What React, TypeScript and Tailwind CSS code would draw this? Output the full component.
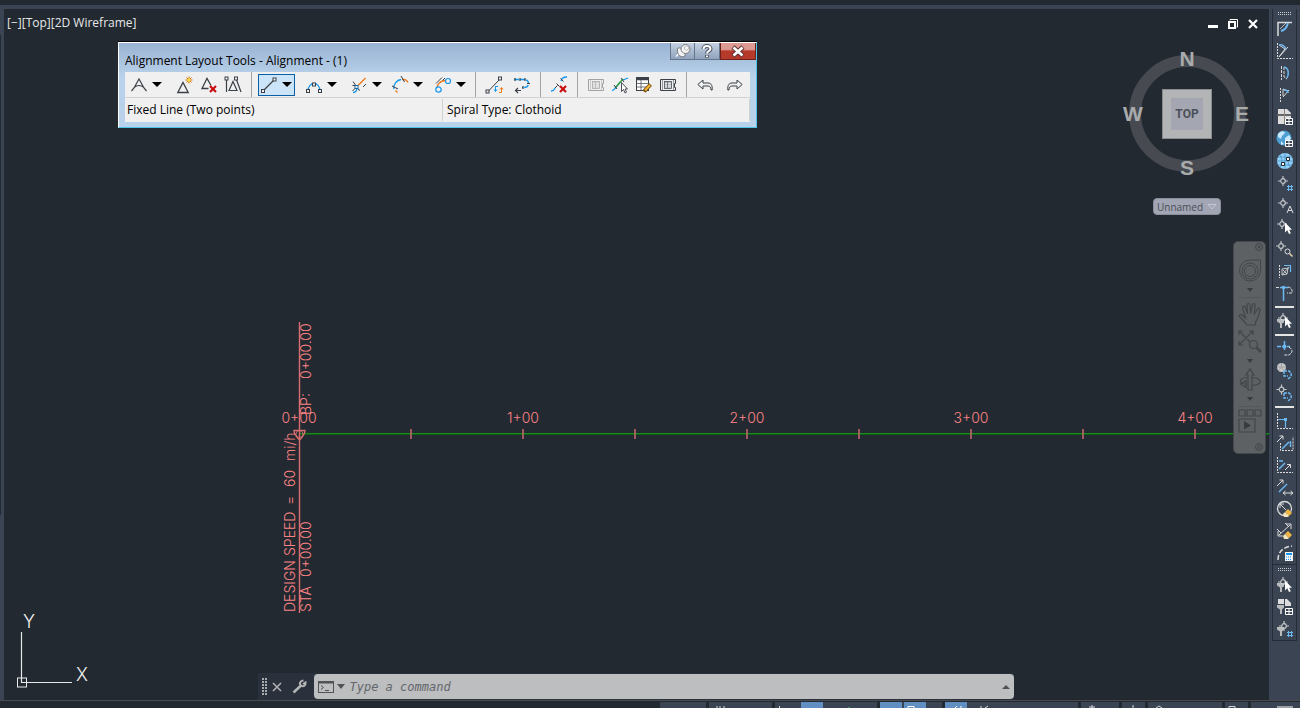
import { ReactNode } from 'react';
import clsx from 'clsx';

const DARK = '#3b4048';
const BLUE = '#1296f0';
const ORANGE = '#f07818';
const RED = '#c80f0f';
const SKY = '#6cb8f0';
const LIGHT = '#dcdcdc';

/* ---------- layout tools window ---------- */

function Glyph({ children }: { children: ReactNode }) {
  return (
    <svg width="16" height="18" viewBox="0 0 16 18" fill="none" stroke={DARK} className="shrink-0 overflow-visible">
      {children}
    </svg>
  );
}

const Node = ({ x, y, color = DARK }: { x: number; y: number; color?: string }) => (
  <rect x={x - 1.5} y={y - 1.5} width="3" height="3" fill="#f0f0f0" stroke={color} />
);

const RedCross = ({ x, y }: { x: number; y: number }) => (
  <path
    d={`M${x} ${y}l6 6M${x + 6} ${y}l-6 6`}
    stroke={RED}
    strokeWidth="2.2"
  />
);

const Sheet = ({ muted }: { muted?: boolean }) => (
  <g stroke={muted ? '#a2a2a2' : DARK}>
    <path d="M.5 3.500h15v4h-1v4h1v3H.5z" />
    <path d="M2.500 4v10" strokeWidth=".5" />
    <path d="M13.500 4v10" strokeWidth=".5" />
    <rect x="4.500" y="5.500" width="7" height="7" fill={muted ? '#d4d4d4' : '#b4bac2'} strokeWidth=".7" />
    <path d="M5 7.500h6M5 9.500h6M5 11h6" stroke="#f0f0f0" strokeWidth=".8" />
    <path d="M7.500 6v6" strokeWidth=".6" />
  </g>
);

const glyphs: Record<string, ReactNode> = {
  tangent: (
    <path d="M.5 15 3 12 8 3l5 9 2.500 3M3 11.500q5-4 10 0" strokeWidth="1.200" />
  ),
  insertPi: (
    <>
      <path d="M.8 16.500 6 6.500l5.200 10z" strokeWidth="1.300" />
      <path d="M12 .5v7M8.500 4h7M9.500 1.500l5 5M14.500 1.500l-5 5" stroke="#d86c00" />
      <circle cx="12" cy="4" r="1.500" fill="#ffe838" stroke="none" />
    </>
  ),
  deletePi: (
    <>
      <path d="M7.500 12.500H1L6 2.500l4 7" strokeWidth="1.300" />
      <RedCross x={9} y={10} />
    </>
  ),
  breakPi: (
    <>
      <path d="M1.500 3v13M11 2.500 16 16M4 14.500 8 5.500l4 9z" strokeWidth="1.200" />
      <Node x={1.5} y={2.5} />
      <Node x={11} y={2.5} />
    </>
  ),
  line: (
    <>
      <path d="M2 15 14 3" strokeWidth="1.200" />
      <Node x={2} y={15} />
      <Node x={13.5} y={3.5} />
    </>
  ),
  curve: (
    <>
      <path d="M2 15C2.500 5 13.500 5 14 15" stroke={BLUE} strokeWidth="1.300" />
      <Node x={2} y={15} />
      <Node x={8} y={8.5} />
      <Node x={14} y={15} />
    </>
  ),
  spiral: (
    <>
      <path d="M2 5.500 5.500 10.500M1.500 15l3-3M15 8l-3 3M1.500 9.500h3M7 13l2 1.500" />
      <path d="M7 9.500 14.500 2" stroke={ORANGE} strokeWidth="1.300" />
      <path d="M2 16.500c3 0 4-2 4-5" stroke={BLUE} strokeWidth="1.300" />
      <Node x={5.5} y={11} color="#1c6aa8" />
    </>
  ),
  floatCurve: (
    <>
      <path d="M2 13C1 8 5 4 9 3.500" stroke={BLUE} strokeWidth="1.300" />
      <path d="M10 3.500c3-.5 5 .5 6 3M3.500 14.500l2 2" stroke={ORANGE} strokeWidth="1.300" />
      <path d="M0 10 6 13M9 0l3.500 6" />
    </>
  ),
  reverse: (
    <>
      <path d="M1 7.500 7 1.500M5 7l5-5" />
      <path d="M2 11C4 6 6 5 11 4.500" stroke={ORANGE} strokeWidth="1.300" />
      <circle cx="3.500" cy="13.500" r="2.700" stroke={BLUE} strokeWidth="1.200" />
      <circle cx="13" cy="5" r="2.500" stroke={BLUE} strokeWidth="1.200" />
    </>
  ),
  convert: (
    <>
      <path d="M2 15.500 14 3" />
      <Node x={1.5} y={15.5} />
      <Node x={14} y={2.5} />
      <path d="M12 10.500h-2.500V15M8 13.500l1.500 2 1.500-2" stroke={BLUE} />
      <path d="M13 16.500h2.500V12M14 13.500l1.500-2 1.500 2" stroke={ORANGE} />
    </>
  ),
  direction: (
    <>
      <path d="M0 3.500h10c6 0 6 8 0 8H8" stroke={BLUE} strokeWidth="1.300" strokeDasharray="5 1" />
      <path d="M1 2v3M6 2v3M11 2v3M13 7.500h3M9 10v3M7 14.500H1M4 12l-2.500 2.500L4 17" strokeWidth="1.200" />
    </>
  ),
  deleteEntity: (
    <>
      <path d="M0 15c3 0 3-1 4-3M10 5c1-3 2-4 6-4" stroke={BLUE} strokeWidth="1.300" />
      <path d="m4 12 2.500-2.500M5.500 7.500l3 3M9.500 2.500l3 3" />
      <RedCross x={9} y={10} />
    </>
  ),
  sheetMuted: <Sheet muted />,
  pick: (
    <>
      <path d="M0 14.500C3 14 6 9 8 6M11 4l5-2" stroke={BLUE} strokeWidth="1.200" />
      <path d="M3 12 11 3" stroke="#2f9a35" strokeWidth="1.300" />
      <path d="m2 9 3 4M9 2l3 4" />
      <path d="M9.500 6.500v9l2-2 1.500 3.500 1.500-.8-1.500-3.200h2.500z" fill="#fff" strokeWidth=".9" />
    </>
  ),
  table: (
    <>
      <rect x=".5" y="1.500" width="12" height="13" fill="#fff" />
      <path d="M1 3h11" strokeWidth="2.500" />
      <path d="M1 7.500h11M1 11h11M5 4v10" strokeWidth=".7" />
      <path d="m8 15.500 6.500-7" stroke="#6a4a10" strokeWidth="4" />
      <path d="m9 14.500 5-5.500" stroke="#f2b430" strokeWidth="2.300" />
    </>
  ),
  sheet: <Sheet />,
  undo: <path d="M6 4 .8 8.500 6 13v-3h5c2 0 3 1.500 3 4h1.200C15.500 9 14 7 11 7H6z" />,
  redo: <path d="m10 4 5.200 4.500L10 13v-3H5c-2 0-3 1.500-3 4H.8C.5 9 2 7 5 7h5z" />,
};

function ToolButton({ icon, label, className }: { icon: string; label: string; className?: string }) {
  return (
    <button aria-label={label} className={clsx('flex h-6 w-6 items-center justify-center', className)}>
      <Glyph>{glyphs[icon]}</Glyph>
    </button>
  );
}

function SplitButton({ icon, label, active, className }: { icon: string; label: string; active?: boolean; className?: string }) {
  return (
    <button
      aria-label={label}
      className={clsx(
        'flex h-[22px] w-[37px] items-center justify-between border px-[2px]',
        active ? 'border-[#0a5ea8] bg-[#cce4f7]' : 'border-transparent',
        className
      )}
    >
      <Glyph>{glyphs[icon]}</Glyph>
      <svg width="10" height="5" viewBox="0 0 10 5">
        <path d="M0 0h10L5 5z" fill="#000" />
      </svg>
    </button>
  );
}

const Divider = () => <span className="mx-1.5 h-[25px] w-px bg-[#a5a5a5]" />;

function LayoutTools() {
  return (
    <section className="absolute top-[33px] left-[114px] w-[639px] border border-t-white border-l-white border-r-[#4cc5e6] border-b-[#4cc5e6] bg-linear-to-b from-[#98b3d2] to-[#b9d1ea] to-40% px-1.5 pb-[5px] font-['Open_Sans',sans-serif] text-[12px] leading-4 text-black shadow-[0_-1px_0_#000]">
      <header className="flex h-[29px] items-end justify-between">
        <h1 className="pb-[3px]">Alignment Layout Tools - Alignment - (1)</h1>
        <div className="-mr-1.5 flex self-start">
          <button aria-label="Pin" className="flex h-[17px] w-[25px] items-center justify-center border border-t-0 border-[#65758a] bg-linear-to-b from-[#c5d2e2] to-[#8fa3bd]">
            <svg width="18" height="16" viewBox="0 0 18 16" fill="#f4f4f4" stroke="#65676b">
              <path d="M6 9.500 2 13.500" stroke="#fff" strokeWidth="1.500" />
              <path d="M4 5c3-1 8 4 7 8-2 1-3 1-5 0S2.500 7 4 5z" stroke="#77797c" />
              <circle cx="11.500" cy="6" r="4.500" stroke="#77797c" />
              <circle cx="12.500" cy="5" r="2.200" stroke="#bbb" />
            </svg>
          </button>
          <button aria-label="Help" className="flex h-[17px] w-[25px] items-center justify-center border border-t-0 border-l-0 border-[#65758a] bg-linear-to-b from-[#c5d2e2] to-[#8fa3bd]">
            <svg width="12" height="15" viewBox="0 0 12 15" fill="none">
              <path d="M2.500 5C2.500 1 9.500 1 9.500 5c0 2-3.500 2-3.500 4.500M6 11v2.500" stroke="#4c525c" strokeWidth="4" />
              <path d="M2.500 5C2.500 1 9.500 1 9.500 5c0 2-3.500 2-3.500 4.500M6 11.500V13" stroke="#fff" strokeWidth="2" />
            </svg>
          </button>
          <button aria-label="Close" className="flex h-[17px] w-9 items-center justify-center border border-t-0 border-[#6e2019] bg-linear-to-b from-[#dc9a92] from-40% to-[#b63a2a] to-50%">
            <svg width="14" height="13" viewBox="0 0 14 13">
              <path d="m2 2 10 9M12 2 2 11" stroke="#5a3030" strokeWidth="4.500" />
              <path d="m2.500 2.500 9 8M11.500 2.500l-9 8" stroke="#fff" strokeWidth="2.700" />
            </svg>
          </button>
        </div>
      </header>
      <div className="bg-[#f0f0f0]">
        <div className="flex h-[26px] items-center border-b border-[#d2d2d2] pl-[3px]">
          <SplitButton icon="tangent" label="Tangent-Tangent" />
          <ToolButton icon="insertPi" label="Insert PI" className="ml-2" />
          <ToolButton icon="deletePi" label="Delete PI" />
          <ToolButton icon="breakPi" label="Break-apart PI" />
          <Divider />
          <SplitButton icon="line" label="Fixed Line" active />
          <SplitButton icon="curve" label="Fixed Curve" className="ml-2" />
          <SplitButton icon="spiral" label="Line with Spiral" className="ml-2" />
          <SplitButton icon="floatCurve" label="Spiral-Curve-Spiral" className="ml-1" />
          <SplitButton icon="reverse" label="Fixed Spiral" className="ml-1.5" />
          <Divider />
          <ToolButton icon="convert" label="Convert line and arc" />
          <ToolButton icon="direction" label="Reverse direction" className="ml-1" />
          <Divider />
          <ToolButton icon="deleteEntity" label="Delete sub-entity" />
          <Divider />
          <ToolButton icon="sheetMuted" label="Edit best fit data" />
          <ToolButton icon="pick" label="Pick sub-entity" />
          <ToolButton icon="table" label="Alignment grid view" />
          <ToolButton icon="sheet" label="Sub-entity editor" />
          <Divider />
          <ToolButton icon="undo" label="Undo" />
          <ToolButton icon="redo" label="Redo" className="ml-1.5" />
        </div>
        <div className="grid grid-cols-[318px_1fr] py-px">
          <p className="border-r border-[#d2d2d2] py-[3px] pl-0.5">Fixed Line (Two points)</p>
          <p className="border-r border-[#d2d2d2] py-[3px] pl-1">Spiral Type: Clothoid</p>
        </div>
      </div>
    </section>
  );
}

/* ---------- drawing ---------- */

const stations = ['1+00', '2+00', '3+00', '4+00'];

function Drawing() {
  return (
    <svg className="absolute inset-0 h-full w-full" fill="none">
      <g transform="translate(295 424)">
        <path d="M0 1H975" stroke="#0c5c12" strokeWidth="2" />
        <path d="M0 .5H975" stroke="#178a1e" strokeWidth="1" />
        <g stroke="#d86e70" strokeWidth="1.400">
          <path d="M.5-111v291" />
          {stations.map((s, i) => (
            <path key={s} d={`M${i * 224 + 112}-4v10M${i * 224 + 224}-4v10`} />
          ))}
          <path d="M-5-2.500h11q0 4-5.500 9.500Q-5 1.500-5-2.500z" />
          <circle cx=".5" cy="1" r="3.500" strokeWidth=".8" />
        </g>
        <g className="font-['Inter',sans-serif] text-[14px] font-light" fill="#ff8486">
          <text x="0" y="-10" textAnchor="middle">0+00</text>
          {stations.map((s, i) => (
            <text key={s} x={(i + 1) * 224} y="-10" textAnchor="middle">{s}</text>
          ))}
          <g transform="rotate(-90)">
            <text x="-179" y="-4">DESIGN</text>
            <text x="-123" y="-4">SPEED</text>
            <text x="-72" y="-4">=</text>
            <text x="-54" y="-4">60</text>
            <text x="-28" y="-4">mi/h</text>
            <text x="-179" y="12">STA</text>
            <text x="-144" y="12">0+00.00</text>
            <text x="18" y="12">BP:</text>
            <text x="54" y="12">0+00.00</text>
          </g>
        </g>
      </g>
    </svg>
  );
}

function AxisIcon() {
  return (
    <svg className="absolute bottom-[7px] left-3 h-[96px] w-[80px]" viewBox="0 -16 80 96" fill="none" stroke="#e8e8e8">
      <path d="M5.500 19v50.500H56" strokeWidth="1.200" />
      <rect x="1.500" y="65" width="9" height="9" />
      <g className="font-['Inter',sans-serif] text-[18px] font-light" fill="#f4f4f4" stroke="none" textAnchor="middle">
        <text x="13" y="15">Y</text>
        <text x="66" y="68">X</text>
      </g>
    </svg>
  );
}

function ViewCube() {
  return (
    <div className="absolute top-[42px] right-[18px] flex w-[128px] flex-col items-center">
      <div className="relative flex h-[125px] w-[128px] items-center justify-center font-['Liberation_Sans',sans-serif] text-[21px] leading-5 font-bold text-[#a9abad]">
        <div className="absolute h-[117px] w-[117px] rounded-full border-[12px] border-[#474b51]" />
        <span className="absolute -top-0.5">N</span>
        <span className="absolute -bottom-0.5">S</span>
        <span className="absolute left-0">W</span>
        <span className="absolute right-0.5">E</span>
        <button className="flex h-[50px] w-[50px] items-center justify-center border border-[#8b8c8e] bg-[#b3b4b5]">
          <span className="flex h-8 w-8 items-center justify-center bg-[#a4a7b2] font-['Roboto',sans-serif] text-[12px] leading-4 text-[#4c5059]">
            TOP
          </span>
        </button>
      </div>
      <div className="relative mt-[22px]">
        <select
          aria-label="Coordinate system"
          className="block h-[17px] w-[68px] appearance-none rounded border border-[#8b8e9b] bg-[#a2a5b3] py-0 pr-0 pl-[3px] font-['Open_Sans',sans-serif] text-[10px] leading-[14px] text-[#4b4e59]"
        >
          <option>Unnamed</option>
        </select>
        <svg className="absolute top-1.5 right-1" width="10" height="6" viewBox="0 0 10 6">
          <path d="M1 .5h8L5 5z" fill="#a2a5b3" stroke="#c5c8d2" />
        </svg>
      </div>
    </div>
  );
}

const NavCaret = () => (
  <svg width="6" height="4" viewBox="0 0 6 4" className="my-[5px] shrink-0">
    <path d="M0 0h6L3 4z" fill="#383c40" />
  </svg>
);

function NavBar() {
  return (
    <nav className="absolute top-[232px] right-[3px] flex h-[213px] w-[33px] flex-col items-center rounded-[5px] border border-[#44484c] bg-[#5d6164] text-[#42464a]">
      <button aria-label="Close" className="mt-px self-end pr-0.5">
        <svg width="8" height="8" viewBox="0 0 8 8" fill="none" stroke="currentColor">
          <circle cx="4" cy="4" r="3.500" />
          <path d="m2.500 2.500 3 3M5.500 2.500l-3 3" />
        </svg>
      </button>
      <button aria-label="Full navigation wheel" className="mt-2">
        <svg width="24" height="24" viewBox="0 0 24 24" fill="none" stroke="currentColor">
          <path d="M12 1h10.500v11A10.500 10.500 0 1 1 12 1z" />
          <circle cx="12" cy="12" r="8" />
          <circle cx="12" cy="12" r="5.500" />
          <path d="m6.500 18 2-2M17.500 18l-2-2" />
        </svg>
      </button>
      <NavCaret />
      <span className="h-px w-6 shrink-0 bg-[#54585b]" />
      <button aria-label="Pan" className="mt-1">
        <svg width="24" height="24" viewBox="0 0 24 24" fill="none" stroke="currentColor" strokeWidth="1.200">
          <path d="M9 23C7 20 5 18 1.500 14.500c-1-1.500 1-3 2.500-1.500l3.500 3L4.500 6c-.5-2 2-2.700 2.700-.8l2.300 6.500L9 3c0-2 3-2 3 0l.5 8.500L14.500 3c.5-2 3-1.500 2.700.5l-1.200 9L19.500 7c1-1.700 3-.7 2.500 1-1 4-2 9-4.500 12v3z" />
        </svg>
      </button>
      <button aria-label="Zoom extents" className="mt-1">
        <svg width="24" height="24" viewBox="0 0 24 24" fill="none" stroke="currentColor" strokeWidth="1.200">
          <path d="m1.500 1.500 13 13M14.500 1.500l-13 13M1 5V1h4M11 1h4v4M5 15H1v-4" />
          <circle cx="15.500" cy="14.500" r="4" fill="#5d6164" />
          <path d="m18.500 17.500 4.500 4.500" strokeWidth="2.500" />
        </svg>
      </button>
      <NavCaret />
      <button aria-label="Orbit">
        <svg width="24" height="24" viewBox="0 0 24 24" fill="none" stroke="currentColor" strokeWidth="1.200">
          <path d="M10 22V7H8l4-6 4 6h-2v15z" />
          <path d="M10 9.500c-9 .5-11 5-2 7M14 9.500c11 1 11 7 0 8M8 12.500 2.500 16 8 19.500z" />
        </svg>
      </button>
      <NavCaret />
      <span className="h-px w-6 shrink-0 bg-[#54585b]" />
      <button aria-label="ShowMotion" className="mt-0.5">
        <svg width="24" height="24" viewBox="0 0 24 24" fill="none" stroke="currentColor" strokeWidth="1.200">
          <path d="M1 1h6v6H1zM9 1h6v6H9zM17 1h6v6h-6zM1 10h16v13H1z" />
          <path d="m6 12 7 4.500-7 4z" fill="#383c40" stroke="none" />
        </svg>
      </button>
      <button aria-label="Customize" className="mt-auto mb-0.5 self-end pr-0.5">
        <svg width="8" height="8" viewBox="0 0 8 8" fill="none" stroke="currentColor">
          <circle cx="4" cy="4" r="3.500" />
          <path d="M2 3h4M2 5h4" />
        </svg>
      </button>
    </nav>
  );
}

function WindowControls() {
  return (
    <div className="absolute top-[9px] right-[10px] flex items-center gap-2 text-white">
      <button aria-label="Minimize">
        <svg width="12" height="12" viewBox="0 0 12 12"><path d="M1 7h10v3H1z" fill="#fff" /></svg>
      </button>
      <button aria-label="Restore">
        <svg width="12" height="12" viewBox="0 0 12 12" fill="none" stroke="#fff">
          <path d="M3 2.500V1.500h7.500V9H9.500" />
          <rect x="2" y="4" width="6" height="6" strokeWidth="2" />
        </svg>
      </button>
      <button aria-label="Close">
        <svg width="12" height="12" viewBox="0 0 12 12"><path d="m2 2 8 8M10 2l-8 8" stroke="#fff" strokeWidth="2.200" /></svg>
      </button>
    </div>
  );
}

function CommandLine() {
  return (
    <div className="absolute inset-x-0 bottom-0 flex justify-center pr-0.5">
      <form className="flex h-[27px] w-[756px] items-stretch bg-[#2a303c]">
        <div className="flex w-14 items-center pl-1">
          <svg width="6" height="18" viewBox="0 0 6 18" fill="#a9abad">
            {[0, 3, 6, 9, 12, 15].map(y => (
              <path key={y} d={`M0 ${y}h2v2H0zM3 ${y}h2v2H3z`} />
            ))}
          </svg>
          <button type="button" aria-label="Close" className="ml-1">
            <svg width="10" height="10" viewBox="0 0 10 10"><path d="m1 1 8 8M9 1 1 9" stroke="#b4b5b6" strokeWidth="1.500" /></svg>
          </button>
          <button type="button" aria-label="Customize" className="ml-2.5">
            <svg width="15" height="15" viewBox="0 0 15 15" fill="none" stroke="#b4b5b6">
              <path d="M1.500 13.500 9 6.500" strokeWidth="2.500" />
              <path d="M11.500 1.500C8 1.500 7 5 9 6.500c2 1.500 5 .5 4.500-3L11 5" strokeWidth="2" />
            </svg>
          </button>
        </div>
        <div className="mt-px mb-px flex flex-1 items-center rounded-sm bg-[#bcbec0] px-1">
          <button type="button" aria-label="Recent commands" className="flex items-center gap-0.5">
            <svg width="17" height="12" viewBox="0 0 17 12" fill="none" stroke="#505255">
              <rect x=".5" y=".5" width="15" height="11" />
              <path d="M1 1.500h14" strokeWidth="2" />
              <path d="m3 4.500 2.500 2L3 8.500M7 9.500h4" />
            </svg>
            <svg width="8" height="5" viewBox="0 0 8 5"><path d="M0 0h8L4 5z" fill="#505255" /></svg>
          </button>
          <input
            aria-label="Command"
            placeholder="Type a command"
            className="ml-1 min-w-0 flex-1 bg-transparent pl-px font-['DejaVu_Sans_Mono',monospace] text-[12px] leading-4 italic outline-none placeholder:text-[#63666a]"
          />
          <svg width="8" height="5" viewBox="0 0 8 5"><path d="M0 5h8L4 1z" fill="#505255" /></svg>
        </div>
      </form>
    </div>
  );
}

/* ---------- right hand toolbars ---------- */

const Target = ({ x = 8, y = 8 }: { x?: number; y?: number }) => (
  <g stroke="#c4c6c9">
    <circle cx={x} cy={y} r="2.300" strokeWidth="1.200" />
    <path d={`M${x} ${y - 5}v2.500M${x} ${y + 2.500}v2.500M${x - 5} ${y}h2.500M${x + 2.500} ${y}h2.500`} strokeWidth="1.200" />
  </g>
);
const Cursor = () => <path d="M9 4.500v10l2.300-2.300L13 16l1.800-.8-1.600-3.500H16z" fill="#fff" />;
const Hash = () => <path d="M12.500 11v6M15.500 11v6M11 12.500h6M11 15.500h6" stroke={SKY} />;
const Cells = () => <path d="M9.500 10.500h7v6h-7zM13 10.500v6M9.500 13.500h7" stroke="#fff" fill="#3b4453" />;
const Frame = () => <path d="M1.500 1v15.500H17" stroke={LIGHT} strokeDasharray="2 1" />;
const Loop = () => (
  <path d="M8 9h5q5 4-1 8M8 9v5h4" stroke={SKY} strokeWidth="1.500" strokeDasharray="3 1" />
);
const Funnel = () => <path d="M1 7h7v2.500L6 11.500V16H4v-4.500L1 9.500z" fill="#b9bbbd" />;
const Brush = () => (
  <>
    <path d="m9 12 3-3 4 4-3 3z" fill="#f0b540" />
    <path d="m7 14 2-2 4 4-1 1H8z" fill="#f4e3b8" />
  </>
);
const Globe = () => (
  <>
    <circle cx="8" cy="8" r="7.500" fill="#4c9fd0" />
    <path d="M2 4c3-4 6-3 7-1L6 6 5 9 2 7zM9 8l4-3 2 3-3 5-3-1zM5 11l3 3-3 1z" fill="#c9e8fb" />
  </>
);

const sideIcons: Record<string, ReactNode> = {
  corner: (
    <>
      <path d="M2 16V2.500h14" stroke={LIGHT} strokeWidth="1.500" />
      <path d="M5 11c4-1 6-4 7-8" stroke={SKY} strokeWidth="2" />
      <path d="M4 9 10 3" stroke={LIGHT} strokeWidth=".8" />
    </>
  ),
  angle: (
    <>
      <Frame />
      <path d="m3 3 6 4-6 8M3 15 12 5" stroke={LIGHT} />
      <path d="M3 3c4-1 6 2 7 4" stroke={SKY} strokeWidth="1.500" />
    </>
  ),
  arcSide: (
    <>
      <path d="M5.500 2v14M8 3v10l3 2" stroke={LIGHT} strokeDasharray="3 1" />
      <path d="M8 3c5 1 5 7 3 11" stroke={SKY} strokeWidth="1.500" />
    </>
  ),
  flag: (
    <>
      <path d="M4.500 2v14" stroke={LIGHT} strokeDasharray="2 1" />
      <path d="M7 10V3l5 2M7 11l6-7" stroke={LIGHT} />
      <path d="M8 4c3 0 4 1 4 3" stroke={SKY} strokeWidth="1.500" />
    </>
  ),
  sheetGrid: (
    <>
      <path d="M2 1h6v5H2zM9 1h2l4 4v1H9zM2 8h6v8H2zM9 8h6v2H9z" fill={LIGHT} />
      <path d="M1 7h14M8.500 1v15" stroke="#8b8580" />
      <Cells />
    </>
  ),
  globeGrid: <><Globe /><Cells /></>,
  globe: (
    <>
      <circle cx="9" cy="9" r="8" fill="#8fd0f8" />
      <path d="M1 9h16M9 1v16M4 3q4 6 0 12M14 3q-4 6 0 12M2 5h14M2 13h14" stroke="#4a90c0" strokeWidth=".8" />
      <path d="M10.500 5.500h3v3h-3zM5.500 10.500h3v3h-3z" fill="#fff" stroke="#222930" />
    </>
  ),
  targetHash: <><Target x={7} y={7} /><Hash /></>,
  targetText: <><Target x={7} y={7} /><path d="m11 17 3-7 3 7M12 14.500h4" stroke={LIGHT} /></>,
  targetCursor: <><Target x={6} y={6} /><Cursor /></>,
  targetZoom: (
    <>
      <Target x={5} y={6} />
      <circle cx="11.500" cy="11.500" r="2.500" stroke={LIGHT} />
      <path d="m13.500 13.500 3 3" stroke="#e9d4b0" strokeWidth="1.500" />
    </>
  ),
  mirror: (
    <>
      <path d="M3.500 3v13" stroke={LIGHT} strokeDasharray="2 1" />
      <path d="M8 3.500h6.500V10" stroke={SKY} strokeWidth="1.200" />
      <path d="M6 13V7l6-1-1 6z M6 13l7-8M7 8l4 4" stroke="#c9cbcd" />
    </>
  ),
  tee: (
    <>
      <path d="M4 3.500h8M7.500 3v14" stroke={SKY} strokeWidth="1.500" />
      <path d="M0 3.500h3M12 3q5 1 4 6h-5" stroke={LIGHT} strokeDasharray="3 1" />
      <circle cx="7.500" cy="3.500" r="1.800" fill={SKY} />
    </>
  ),
  filterCursor: <><Funnel /><Target x={7} y={6} /><Cursor /></>,
  node: (
    <>
      <path d="M8.500 1v10M1 6.500h13" stroke={SKY} strokeWidth="1.500" strokeDasharray="4 1" />
      <path d="M13 7q6 4 0 8H8" stroke={LIGHT} strokeDasharray="3 1" />
      <circle cx="8.500" cy="6.500" r="2" fill={SKY} />
    </>
  ),
  discLoop: <><circle cx="5.500" cy="5.500" r="4.500" fill="#c4c6c7" /><path d="M5.500 1v4.500L2 9M5.500 5.500 9 9M1 5h9" stroke="#999" strokeWidth=".8" /><Loop /></>,
  targetLoop: <><Target x={5.5} y={5.5} /><Loop /></>,
  frameAngle: <><Frame /><path d="M2 7.500h6M9.500 9v7" stroke={SKY} strokeWidth="1.200" /><path d="M8 6h3v3H8z" fill={SKY} /></>,
  frameArrow: <><path d="M4.500 9v7.500H17V3" stroke={LIGHT} strokeDasharray="2 1" /><path d="m6 15 7-7M14.500 7v6" stroke={SKY} strokeWidth="1.500" /><path d="m1 8 6-6M3.500 2H7v3.500" stroke={LIGHT} /></>,
  frameSlope: <><Frame /><path d="m3 13 6-6M3 5h4" stroke={SKY} strokeWidth="1.500" /><path d="m9 14 5-5M11 8.500h3.500V12" stroke={LIGHT} /></>,
  slope: <><path d="m3 14 8-8" stroke={SKY} strokeWidth="1.500" /><path d="m1 8 6-6M3.500 2H7v3.500M7 15h10M9.500 13l-2.500 2 2.500 2M14.500 13l2.500 2-2.500 2" stroke={LIGHT} /></>,
  circleBrush: <><circle cx="8.500" cy="8.500" r="7" stroke={LIGHT} strokeWidth="1.300" /><path d="m10 10-6-6M4 8V4h4" stroke={LIGHT} /><Brush /></>,
  arrowBrush: <><path d="m3 13 11-10M2 9v5h5M15 7V2h-5M1 7l4 4M9 1l4 4" stroke={LIGHT} /><Brush /></>,
  calc: (
    <>
      <path d="M2 16Q2 4 16 2" stroke={LIGHT} strokeWidth="1.500" strokeDasharray="5 2" />
      <rect x="9" y="8" width="8" height="9" fill="#f2f4f6" />
      <path d="M10 10h6" stroke="#1296f0" strokeWidth="2" />
      <path d="M10 13h6M10 15.500h6" stroke="#1296f0" strokeDasharray="1 1" />
    </>
  ),
  filterGrid: <><path d="M2 1h6v5H2zM9 1h2l4 4v3H9z" fill={LIGHT} /><Funnel /><Cells /></>,
  filterHash: <><Funnel /><Target x={8} y={6} /><Hash /></>,
};

const Grip = () => (
  <svg width="14" height="9" viewBox="0 0 14 9" fill="#c9ccd1" className="mx-auto shrink-0">
    {[0, 2, 4, 6, 8, 10, 12].map(x => (
      <path key={x} d={`M${x} 3h1v1H${x}zM${x} 5h1v1H${x}z`} />
    ))}
  </svg>
);

const mainTools = [
  'corner', 'angle', 'arcSide', 'flag', 'sheetGrid', 'globeGrid', 'globe', 'targetHash', 'targetText',
  'targetCursor', 'targetZoom', 'mirror', 'tee', '-', 'filterCursor', '-', 'node', 'discLoop',
  'targetLoop', '-', 'frameAngle', 'frameArrow', 'frameSlope', 'slope', 'circleBrush', 'arrowBrush', 'calc',
];
const filterTools = ['filterCursor', 'filterGrid', 'filterHash'];

function SideBar({ tools }: { tools: string[] }) {
  return (
    <div className="flex flex-col border-x border-b border-[#252c38]">
      <Grip />
      {tools.map((name, i) =>
        name === '-' ? (
          <div key={i} className="flex h-1.5 items-center px-0.5">
            <span className="h-0.5 w-full bg-[#e4e4e4]" />
          </div>
        ) : (
          <button key={i} aria-label={name} className="flex h-[22px] items-center justify-center">
            <svg width="18" height="18" viewBox="0 0 18 18" fill="none">{sideIcons[name]}</svg>
          </button>
        )
      )}
    </div>
  );
}

/* ---------- status bar ---------- */

const Active = ({ className }: { className?: string }) => <span className={clsx('h-full w-[22px] bg-[#628fc2]', className)} />;
const Bit = ({ d, color = '#d5d7da' }: { d: string; color?: string }) => (
  <svg width="22" height="6" viewBox="0 0 22 6" fill="none" stroke={color}><path d={d} /></svg>
);

function StatusBar() {
  const cell = 'flex h-full bg-[#3b4453]';
  return (
    <footer className="flex h-2 shrink-0 justify-end gap-[3px] overflow-hidden border-t border-[#494b4e] pt-px">
      <div className={clsx(cell, 'w-[46px]')} />
      <div className={clsx(cell, 'w-[63px] pl-1')}><Bit d="M4 4v2M7 4v2M11 4v2" /></div>
      <div className={clsx(cell, 'w-[102px]')}>
        <Bit d="M4.500 4v2" />
        <Active className="ml-1" />
        <span className="ml-4"><Bit d="M10 5v1" color="#4cd07a" /></span>
      </div>
      <div className={clsx(cell, 'w-[62px] gap-0.5')}>
        <Active />
        <span className="h-full bg-[#628fc2]"><Bit d="M4 6V4.500h6V6" color="#fff" /></span>
      </div>
      <div className={clsx(cell, 'w-[133px]')}>
        <span className="h-full bg-[#628fc2]"><Bit d="M10 6l2-2M16 4v2" color="#fff" /></span>
        <span className="ml-2.5"><Bit d="M4 4v2M8 6l3-2" /></span>
      </div>
      <div className={clsx(cell, 'w-[38px]')}><Bit d="M8 5h6M11 3v3" /></div>
      <div className={clsx(cell, 'w-[23px]')}><Bit d="M11 3v3" /></div>
      <div className={clsx(cell, 'w-[74px]')}><Bit d="M8 6l3-2 3 2" /></div>
      <div className={clsx(cell, 'w-[23px]')}><Bit d="M4 6V4.500h6V6" /></div>
      <div className={clsx(cell, 'w-[49px] pl-6')}><Bit d="M2 5h16" color="#fff" /></div>
    </footer>
  );
}

export default function App() {
  return (
    <div className="flex h-screen flex-col overflow-hidden bg-[#222930] pt-[5px]">
      <div className="flex min-h-0 flex-1 border-t-4 border-[#3b4453] bg-[#3b4453]">
        <div className="w-1 shrink-0 pt-[26px]">
          <div className="h-[480px] w-px bg-[#222930]" />
        </div>
        <main className="relative min-w-0 flex-1 overflow-hidden bg-[#222930]">
          <Drawing />
          <p className="absolute top-1.5 left-[3px] font-['Open_Sans',sans-serif] text-[12px] leading-4 text-[#e6e7e8]">
            [−][Top][2D Wireframe]
          </p>
          <LayoutTools />
          <WindowControls />
          <ViewCube />
          <NavBar />
          <AxisIcon />
          <CommandLine />
        </main>
        <aside className="flex w-[31px] shrink-0 flex-col px-[3px]">
          <SideBar tools={mainTools} />
          <SideBar tools={filterTools} />
        </aside>
      </div>
      <StatusBar />
    </div>
  );
}
